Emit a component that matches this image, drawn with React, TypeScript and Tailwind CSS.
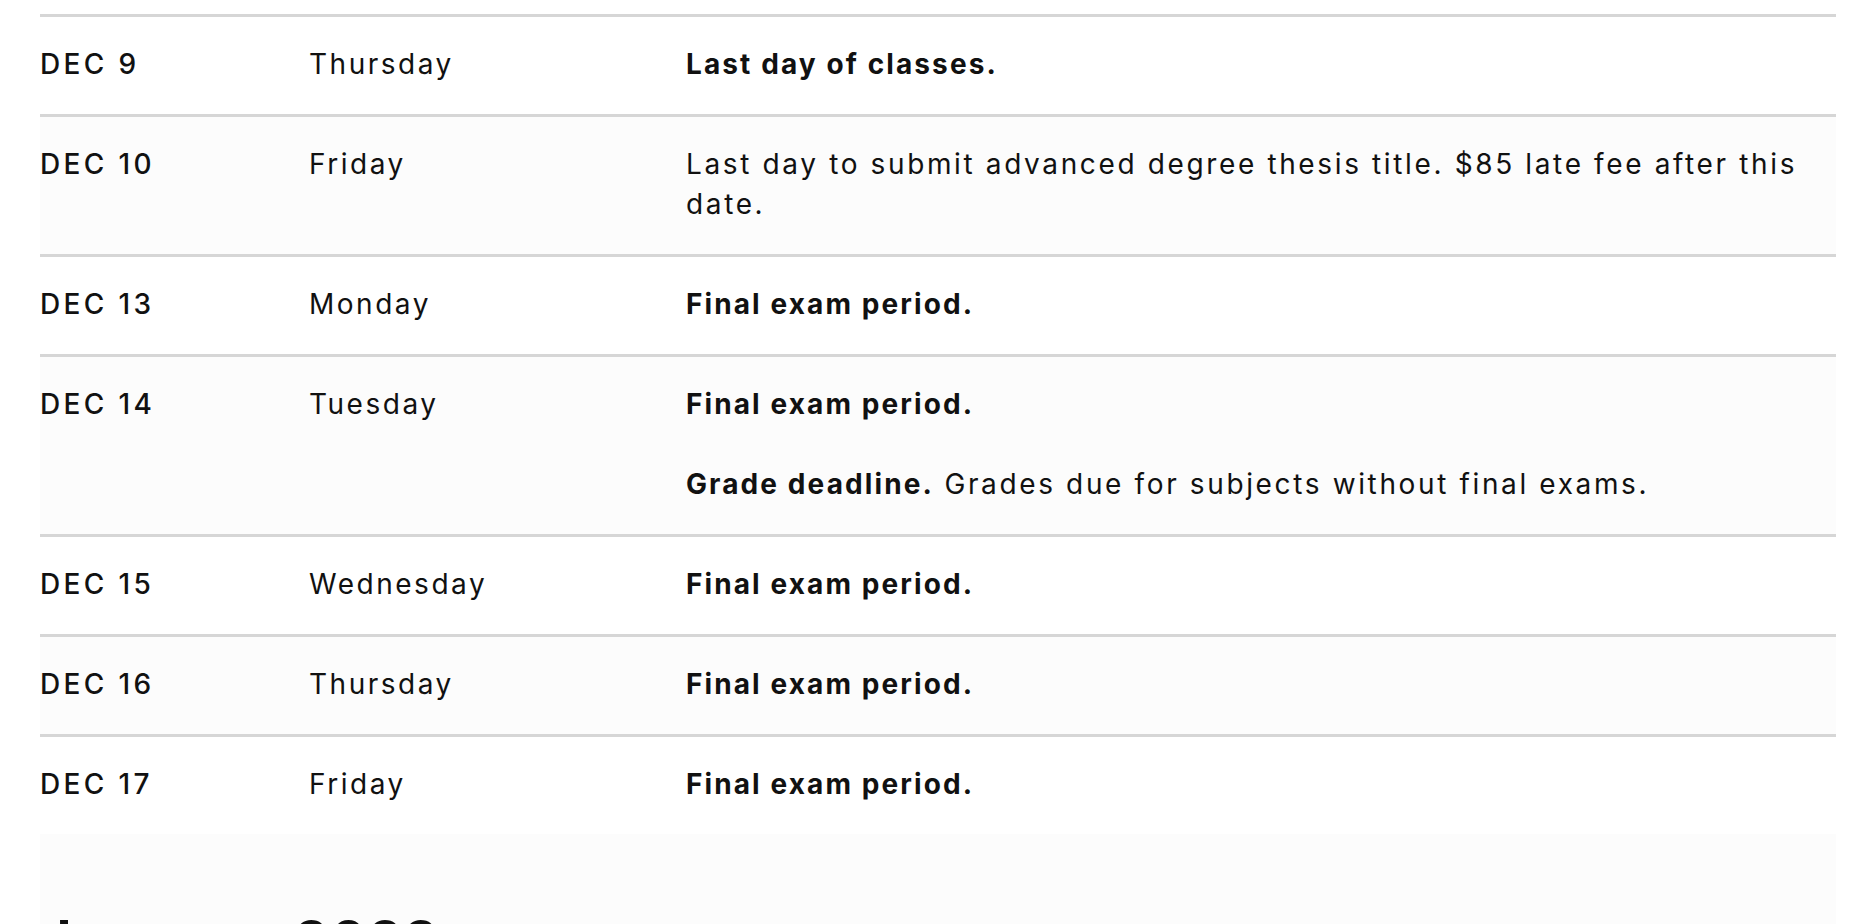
import React from "react";

type Row = {
  date: string;
  day: string;
  items: { bold?: string; text?: string }[];
};

const rows: Row[] = [
  { date: "DEC 9", day: "Thursday", items: [{ bold: "Last day of classes." }] },
  {
    date: "DEC 10",
    day: "Friday",
    items: [{ text: "Last day to submit advanced degree thesis title. $85 late fee after this date." }],
  },
  { date: "DEC 13", day: "Monday", items: [{ bold: "Final exam period." }] },
  {
    date: "DEC 14",
    day: "Tuesday",
    items: [
      { bold: "Final exam period." },
      { bold: "Grade deadline.", text: "Grades due for subjects without final exams." },
    ],
  },
  { date: "DEC 15", day: "Wednesday", items: [{ bold: "Final exam period." }] },
  { date: "DEC 16", day: "Thursday", items: [{ bold: "Final exam period." }] },
  { date: "DEC 17", day: "Friday", items: [{ bold: "Final exam period." }] },
];

export default function App() {
  return (
    <div className="min-h-screen bg-white text-[#111] font-['Inter','Liberation_Sans',sans-serif]">
      <div className="ml-[40px] w-[1796px] pt-[14px]">
        {rows.map((row, i) => (
          <div
            key={row.date}
            className={`flex border-t-[3px] border-[#d6d6d6] pt-[27px] pb-[30px] text-[28px] leading-[40px] ${
              i % 2 === 1 ? "bg-[#fcfcfc]" : "bg-white"
            }`}
          >
            <div className="w-[269px] shrink-0 font-medium tracking-[0.12em]">{row.date}</div>
            <div className="w-[377px] shrink-0 tracking-[0.09em]">{row.day}</div>
            <div className="flex-1 flex flex-col gap-[40px] tracking-[0.094em]">
              {row.items.map((it, j) => (
                <p key={j}>
                  {it.bold && <span className="font-bold tracking-[0.075em]">{it.bold}</span>}
                  {it.bold && it.text ? " " : ""}
                  {it.text}
                </p>
              ))}
            </div>
          </div>
        ))}
        <div className="bg-[#fcfcfc] pt-[74px] pb-[40px]">
          <h2 className="text-[54px] leading-[64px] font-bold tracking-[0.03em] [word-spacing:12px]">
            January 2022
          </h2>
        </div>
      </div>
    </div>
  );
}
